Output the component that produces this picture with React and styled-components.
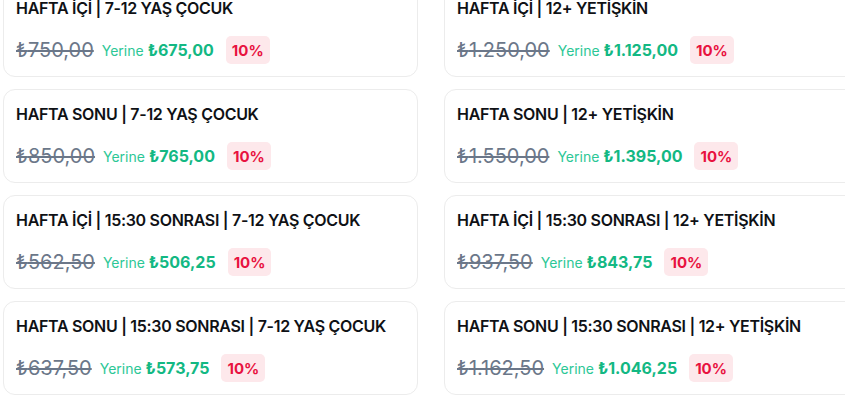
import React from 'react';
import styled, { createGlobalStyle } from 'styled-components';

const GlobalStyle = createGlobalStyle`
  html, body {
    margin: 0;
    padding: 0;
    background: #ffffff;
    overflow: hidden;
    font-family: Inter, "Noto Sans", "Liberation Sans", sans-serif;
  }
`;

const Grid = styled.div`
  display: grid;
  grid-template-columns: 415px 415px;
  column-gap: 26px;
  row-gap: 12px;
  margin: -17px 0 0 3px;
  width: 856px;
`;

const Card = styled.div`
  display: flex;
  flex-direction: column;
  gap: 16px;
  padding: 12px;
  border: 1px solid #ececec;
  border-radius: 12px;
  background: #fff;
`;

const Title = styled.h3`
  margin: 0;
  font-size: 16px;
  line-height: 24px;
  font-weight: 600;
  color: #0f1115;
  letter-spacing: -0.3px;
  white-space: nowrap;
`;

const PriceRow = styled.div`
  display: flex;
  align-items: center;
  height: 28px;
`;

const OldPrice = styled.span`
  font-size: 20px;
  font-weight: 400;
  color: #6b7789;
  text-decoration: line-through;
  text-decoration-thickness: 1.5px;
  margin-right: 8px;
`;

const Instead = styled.span`
  font-size: 14px;
  font-weight: 400;
  color: #2cc796;
  margin-right: 12px;

  b {
    font-size: 16px;
    font-weight: 700;
    color: #13b883;
  }
`;

const Badge = styled.span`
  display: inline-flex;
  align-items: center;
  justify-content: center;
  height: 28px;
  padding: 0 6px;
  border-radius: 5px;
  background: #fde8eb;
  color: #e8123f;
  font-size: 15px;
  font-weight: 700;
`;

const tickets = [
  { title: 'HAFTA İÇİ | 7-12 YAŞ ÇOCUK', old: '750,00', price: '675,00' },
  { title: 'HAFTA İÇİ | 12+ YETİŞKİN', old: '1.250,00', price: '1.125,00' },
  { title: 'HAFTA SONU | 7-12 YAŞ ÇOCUK', old: '850,00', price: '765,00' },
  { title: 'HAFTA SONU | 12+ YETİŞKİN', old: '1.550,00', price: '1.395,00' },
  { title: 'HAFTA İÇİ | 15:30 SONRASI | 7-12 YAŞ ÇOCUK', old: '562,50', price: '506,25' },
  { title: 'HAFTA İÇİ | 15:30 SONRASI | 12+ YETİŞKİN', old: '937,50', price: '843,75' },
  { title: 'HAFTA SONU | 15:30 SONRASI | 7-12 YAŞ ÇOCUK', old: '637,50', price: '573,75' },
  { title: 'HAFTA SONU | 15:30 SONRASI | 12+ YETİŞKİN', old: '1.162,50', price: '1.046,25' },
];

export default function App() {
  return (
    <>
      <GlobalStyle />
      <Grid>
        {tickets.map((t, i) => (
          <Card key={i}>
            <Title>{t.title}</Title>
            <PriceRow>
              <OldPrice>₺{t.old}</OldPrice>
              <Instead>
                Yerine <b>₺{t.price}</b>
              </Instead>
              <Badge>10%</Badge>
            </PriceRow>
          </Card>
        ))}
      </Grid>
    </>
  );
}
